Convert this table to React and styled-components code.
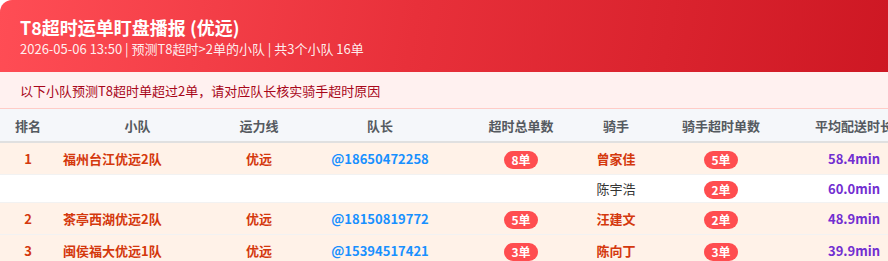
import React from 'react';
import styled, { createGlobalStyle } from 'styled-components';

const GlobalStyle = createGlobalStyle`
    body {
        margin: 0;
        background: #ffffff;
        overflow: hidden;
        font-family: "Noto Sans CJK SC", "Noto Sans", sans-serif;
    }
`;

const COLORS = {
    volcano: '#d4380d',
    blue: '#1890ff',
    purple: '#722ed1',
    badge: '#ff4d4f',
    headText: '#555a60',
};

const Card = styled.div`
    width: 917px;
    border-top-left-radius: 12px;
    overflow: hidden;
    background: #ffffff;
`;

const Banner = styled.div`
    height: 72px;
    box-sizing: border-box;
    padding: 14px 20px;
    background: linear-gradient(100deg, #ff4d55 0%, #e8303a 45%, #cc1622 100%);
    color: #ffffff;
`;

const Title = styled.h1`
    margin: 0;
    font-size: 18px;
    line-height: 26px;
    font-weight: 700;
`;

const Subtitle = styled.div`
    font-size: 13px;
    line-height: 18px;
    color: rgba(255, 255, 255, 0.92);
`;

const Notice = styled.div`
    height: 37px;
    box-sizing: border-box;
    display: flex;
    align-items: center;
    padding: 0 20px;
    background: #fff1f0;
    border-bottom: 1px solid #ffccc7;
    color: #a8071a;
    font-size: 13px;
`;

const Table = styled.table`
    width: 917px;
    table-layout: fixed;
    border-collapse: collapse;
    font-size: 13px;
`;

const Th = styled.th`
    height: 32px;
    padding: 0;
    background: #f5f7fa;
    border-bottom: 2px solid #e0e0e0;
    color: ${COLORS.headText};
    font-weight: 700;
    text-align: center;
`;

const Row = styled.tr`
    background: ${p => (p.$sub ? '#ffffff' : '#fff2e8')};
    border-bottom: 1px solid #f2f2f2;
`;

const Td = styled.td`
    height: ${p => (p.$sub ? '27px' : '31px')};
    padding: 0 ${p => (p.$left ? '0 0 7px' : '0')};
    padding-left: ${p => (p.$left ? '7px' : '0')};
    text-align: ${p => (p.$left ? 'left' : 'center')};
    color: ${p => p.$color || '#333333'};
    font-weight: ${p => (p.$bold ? 700 : 400)};
    white-space: nowrap;
`;

const Badge = styled.span`
    display: inline-block;
    width: 34px;
    height: 18px;
    line-height: 18px;
    border-radius: 9px;
    background: ${COLORS.badge};
    color: #ffffff;
    font-size: 12px;
    font-weight: 700;
    text-align: center;
    vertical-align: middle;
`;

const columns = [
    { label: '排名', width: 56 },
    { label: '小队', width: 163 },
    { label: '运力线', width: 80 },
    { label: '队长', width: 162 },
    { label: '超时总单数', width: 120 },
    { label: '骑手', width: 70 },
    { label: '骑手超时单数', width: 140 },
    { label: '平均配送时长', width: 126 },
];

const rows = [
    { rank: '1', team: '福州台江优远2队', line: '优远', leader: '@18650472258', total: 8, rider: '曾家佳', count: 5, avg: '58.4min' },
    { sub: true, rider: '陈宇浩', count: 2, avg: '60.0min' },
    { rank: '2', team: '茶亭西湖优远2队', line: '优远', leader: '@18150819772', total: 5, rider: '汪建文', count: 2, avg: '48.9min' },
    { rank: '3', team: '闽侯福大优远1队', line: '优远', leader: '@15394517421', total: 3, rider: '陈向丁', count: 3, avg: '39.9min' },
];

export default function App () {
    return (
        <>
            <GlobalStyle />
            <Card>
                <Banner>
                    <Title>T8超时运单盯盘播报 (优远)</Title>
                    <Subtitle>2026-05-06 13:50 | 预测T8超时&gt;2单的小队 | 共3个小队 16单</Subtitle>
                </Banner>
                <Notice>以下小队预测T8超时单超过2单，请对应队长核实骑手超时原因</Notice>
                <Table>
                    <colgroup>
                        {columns.map(c => <col key={c.label} style={{ width: c.width }} />)}
                    </colgroup>
                    <thead>
                        <tr>
                            {columns.map(c => <Th key={c.label}>{c.label}</Th>)}
                        </tr>
                    </thead>
                    <tbody>
                        {rows.map((r, i) => (
                            <Row key={i} $sub={r.sub}>
                                <Td $sub={r.sub} $bold $color={COLORS.volcano}>{r.rank}</Td>
                                <Td $sub={r.sub} $left $bold $color={COLORS.volcano}>{r.team}</Td>
                                <Td $sub={r.sub} $bold $color={COLORS.volcano}>{r.line}</Td>
                                <Td $sub={r.sub} $bold $color={COLORS.blue}>{r.leader}</Td>
                                <Td $sub={r.sub}>{r.total && <Badge>{r.total}单</Badge>}</Td>
                                <Td $sub={r.sub} $bold={!r.sub} $color={r.sub ? '#333333' : COLORS.volcano}>{r.rider}</Td>
                                <Td $sub={r.sub}><Badge>{r.count}单</Badge></Td>
                                <Td $sub={r.sub} $bold $color={COLORS.purple}>{r.avg}</Td>
                            </Row>
                        ))}
                    </tbody>
                </Table>
            </Card>
        </>
    );
}
